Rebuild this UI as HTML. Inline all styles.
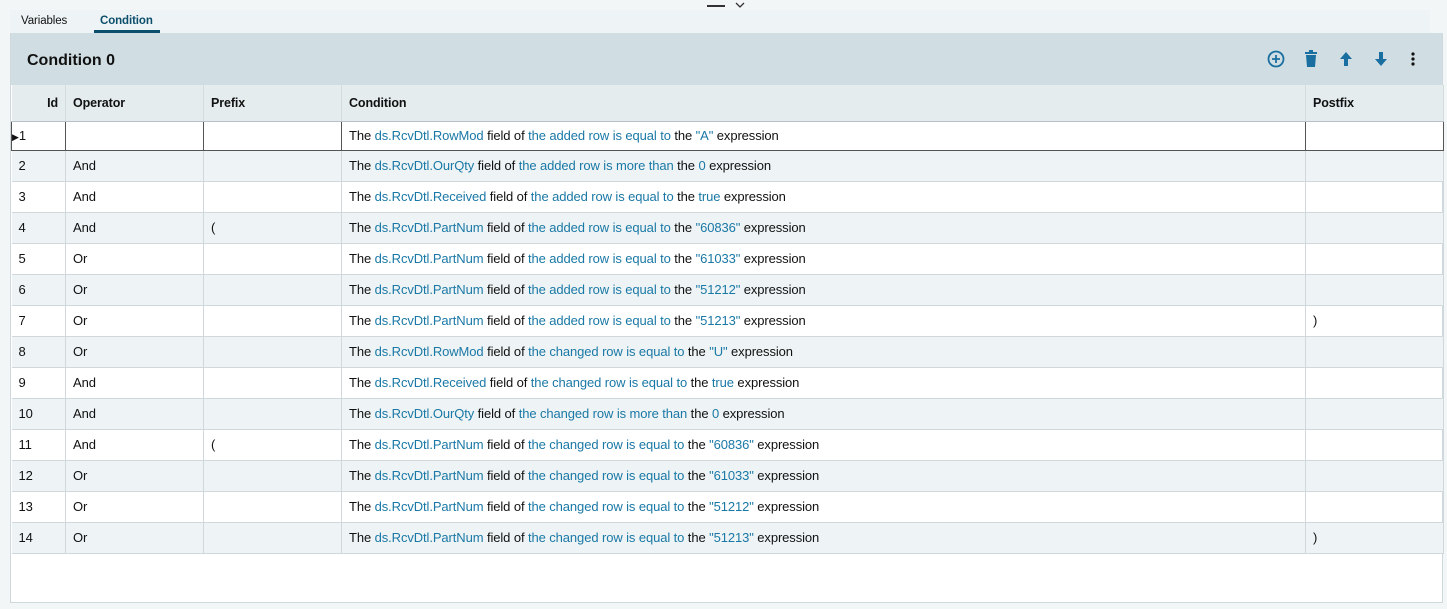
<!DOCTYPE html>
<html><head><meta charset="utf-8"><style>
*{box-sizing:border-box;margin:0;padding:0}
body{width:1447px;height:609px;background:#f3f6f7;font-family:"Liberation Sans",sans-serif;font-size:13px;letter-spacing:-0.1px;color:#111;position:relative;overflow:hidden}
.topbar{position:absolute;left:10px;top:10px;width:1420px;height:23px;background:#eef3f5}
.tab{position:absolute;top:4px;font-size:11.5px}
.panel{position:absolute;left:10px;top:33px;width:1433px;height:570px;background:#fff;border:1px solid #cfd8dc;border-top:0}
.hdr{height:52px;background:#d0dee3;position:relative}
.hdr h1{position:absolute;left:16px;top:19px;font-size:16px;font-weight:bold;letter-spacing:0}
.icons{position:absolute;top:17px}
table{border-collapse:collapse;table-layout:fixed;width:1432px}
th{height:36px;background:#e4ecee;text-align:left;font-weight:bold;padding-left:7px;border-right:1px solid #d3dcdf;border-bottom:1px solid #b8c2c6;font-size:12.5px}
td{height:31px;border-right:1px solid #d0d8db;border-bottom:1px solid #d0d8db;padding-left:7px;white-space:nowrap}
tr:nth-child(odd) td{background:#eef4f5}
th.id{text-align:right;padding-right:7px}
.b{color:#1a78a6}
tr.sel td{border-top:1px solid #555;border-bottom:1px solid #555;height:29px;background:#fff}
tr.sel td:first-child{border-left:1px solid #555}
tr.sel td{border-right:1px solid #555}
</style></head><body>
<div style="position:absolute;left:707px;top:5px;width:18px;height:2px;background:#333"></div>
<svg style="position:absolute;left:735px;top:2px" width="10" height="7"><path d="M1 1l4 4 4-4" fill="none" stroke="#333" stroke-width="1.3"/></svg>
<div class="topbar">
<div class="tab" style="left:11px;top:5px">Variables</div>
<div class="tab" style="left:90px;top:5px;color:#0b4f6c;font-weight:bold">Condition</div>
<div style="position:absolute;left:84px;top:20px;width:66px;height:3px;background:#0b4f6c"></div>
</div>
<div class="panel">
<div class="hdr"><h1>Condition 0</h1>
<svg class="icons" style="left:1256px" width="18" height="18"><circle cx="9" cy="9" r="7.5" fill="none" stroke="#1a6fa0" stroke-width="1.8"/><path d="M9 5v8M5 9h8" stroke="#1a6fa0" stroke-width="1.8"/></svg>
<svg class="icons" style="left:1293px" width="14" height="18"><rect x="1" y="2" width="12" height="2" fill="#1a6fa0"/><rect x="5" y="0" width="4" height="2" fill="#1a6fa0"/><path d="M2 5h10l-1 12H3z" fill="#1a6fa0"/></svg>
<svg class="icons" style="left:1328px" width="14" height="18"><path d="M7 2l6 7H9v7H5V9H1z" fill="#1a6fa0"/></svg>
<svg class="icons" style="left:1363px" width="14" height="18"><path d="M7 16l6-7H9V2H5v7H1z" fill="#1a6fa0"/></svg>
<svg class="icons" style="left:1398px" width="8" height="18"><circle cx="4" cy="4" r="1.6" fill="#111"/><circle cx="4" cy="9" r="1.6" fill="#111"/><circle cx="4" cy="14" r="1.6" fill="#111"/></svg>
</div>
<table>
<colgroup><col style="width:54px"><col style="width:138px"><col style="width:138px"><col style="width:964px"><col style="width:138px"></colgroup>
<tr><th class="id">Id</th><th>Operator</th><th>Prefix</th><th>Condition</th><th>Postfix</th></tr>
<tr class="sel"><td style="padding-left:0"><span style="font-size:9px">&#9654;</span>1</td><td></td><td></td><td>The <span class="b">ds.RcvDtl.RowMod</span> field of <span class="b">the added row</span> <span class="b">is equal to</span> the <span class="b">"A"</span> expression</td><td></td></tr>
<tr><td>2</td><td>And</td><td></td><td>The <span class="b">ds.RcvDtl.OurQty</span> field of <span class="b">the added row</span> <span class="b">is more than</span> the <span class="b">0</span> expression</td><td></td></tr>
<tr><td>3</td><td>And</td><td></td><td>The <span class="b">ds.RcvDtl.Received</span> field of <span class="b">the added row</span> <span class="b">is equal to</span> the <span class="b">true</span> expression</td><td></td></tr>
<tr><td>4</td><td>And</td><td>(</td><td>The <span class="b">ds.RcvDtl.PartNum</span> field of <span class="b">the added row</span> <span class="b">is equal to</span> the <span class="b">"60836"</span> expression</td><td></td></tr>
<tr><td>5</td><td>Or</td><td></td><td>The <span class="b">ds.RcvDtl.PartNum</span> field of <span class="b">the added row</span> <span class="b">is equal to</span> the <span class="b">"61033"</span> expression</td><td></td></tr>
<tr><td>6</td><td>Or</td><td></td><td>The <span class="b">ds.RcvDtl.PartNum</span> field of <span class="b">the added row</span> <span class="b">is equal to</span> the <span class="b">"51212"</span> expression</td><td></td></tr>
<tr><td>7</td><td>Or</td><td></td><td>The <span class="b">ds.RcvDtl.PartNum</span> field of <span class="b">the added row</span> <span class="b">is equal to</span> the <span class="b">"51213"</span> expression</td><td>)</td></tr>
<tr><td>8</td><td>Or</td><td></td><td>The <span class="b">ds.RcvDtl.RowMod</span> field of <span class="b">the changed row</span> <span class="b">is equal to</span> the <span class="b">"U"</span> expression</td><td></td></tr>
<tr><td>9</td><td>And</td><td></td><td>The <span class="b">ds.RcvDtl.Received</span> field of <span class="b">the changed row</span> <span class="b">is equal to</span> the <span class="b">true</span> expression</td><td></td></tr>
<tr><td>10</td><td>And</td><td></td><td>The <span class="b">ds.RcvDtl.OurQty</span> field of <span class="b">the changed row</span> <span class="b">is more than</span> the <span class="b">0</span> expression</td><td></td></tr>
<tr><td>11</td><td>And</td><td>(</td><td>The <span class="b">ds.RcvDtl.PartNum</span> field of <span class="b">the changed row</span> <span class="b">is equal to</span> the <span class="b">"60836"</span> expression</td><td></td></tr>
<tr><td>12</td><td>Or</td><td></td><td>The <span class="b">ds.RcvDtl.PartNum</span> field of <span class="b">the changed row</span> <span class="b">is equal to</span> the <span class="b">"61033"</span> expression</td><td></td></tr>
<tr><td>13</td><td>Or</td><td></td><td>The <span class="b">ds.RcvDtl.PartNum</span> field of <span class="b">the changed row</span> <span class="b">is equal to</span> the <span class="b">"51212"</span> expression</td><td></td></tr>
<tr><td>14</td><td>Or</td><td></td><td>The <span class="b">ds.RcvDtl.PartNum</span> field of <span class="b">the changed row</span> <span class="b">is equal to</span> the <span class="b">"51213"</span> expression</td><td>)</td></tr>
</table>
</div>
</body></html>
